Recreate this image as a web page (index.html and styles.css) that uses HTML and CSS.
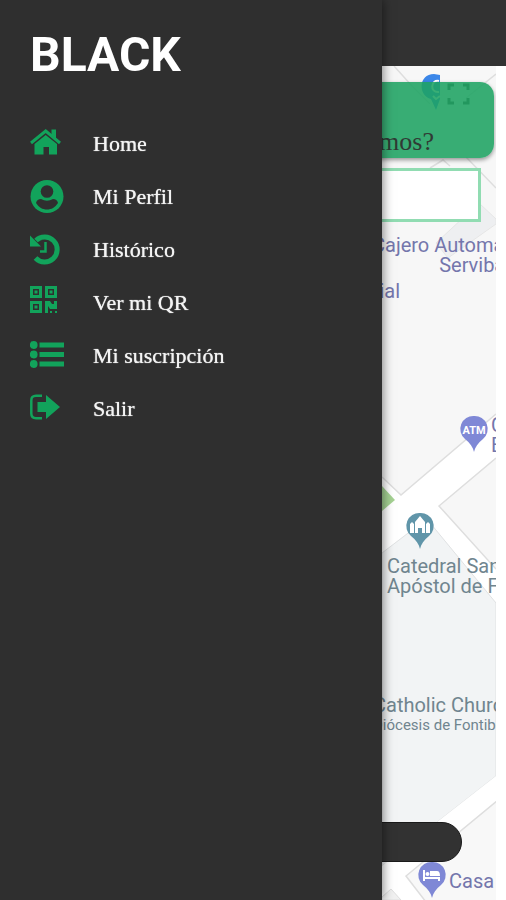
FILE: index.html
```html
<!DOCTYPE html>
<html lang="es">
<head>
    <meta charset="UTF-8">
    <meta name="viewport" content="width=device-width, initial-scale=1.0">
    <title>Black</title>
    <link rel="stylesheet" href="styles.css">
</head>
<body>
    <div class="screen">
        <header class="topbar"></header>

        <main class="map">
            <!-- Streets, blocks and pins -->
            <svg class="map-drawing" viewBox="0 66 496 834" preserveAspectRatio="xMinYMin slice" aria-hidden="true">
                <rect x="0" y="66" width="496" height="834" fill="#f7f7f7"/>
                <g fill="none" stroke="#dedede" stroke-width="1.5">
                    <path d="M394 66L412 86L430 104M496 74L466 98M430 168L443 160L450 166M466 157L496 188"/>
                </g>
                <path d="M479 203L496 219V224L448 258L436 243Z" fill="#eeeff1" stroke="#e6e6e6"/>
                <path d="M382 477L401 495L496 414V458L439 506L496 569V603L431 527L425 523L382 553Z" fill="#fff"/>
                <path d="M382 477L401 495L496 414M496 458L439 506L496 569" fill="none" stroke="#dedede" stroke-width="1.5"/>
                <path d="M382 553L420 524H431L496 603V776L441 819L382 866Z" fill="#f2f4f5" stroke="#e0e2e3"/>
                <path d="M496 776L441 819L382 866V900H496V802Z" fill="#fff"/>
                <path d="M498 800L406 876L426 902H498Z" fill="#f8f8f8" stroke="#dedede" stroke-width="1.5"/>
                <path d="M382 897L391 889L401 900H382Z" fill="#f1f1f1" stroke="#dedede"/>
                <path d="M382 486L395 500L382 511Z" fill="#a5d293"/>

                <path d="M440 75V99L436 110L431 99C418 96 418 74 434 74Z" fill="#3b86e8"/>
                <path d="M439 81C431 79 429 93 439 92M433 96L436 99L440 96" fill="none" stroke="#fff" stroke-width="2"/>
                <path d="M449 90V85H454M463 85H468V90M468 98V103H463M454 103H449V98" fill="none" stroke="#444" stroke-width="3"/>

                <path d="M474 416A13 13 0 0 1 483 439C478 443 475 447 474 452C473 447 470 443 465 439A13 13 0 0 1 474 416Z" fill="#7f88d6"/>
                <text class="pin-text" x="474" y="434" text-anchor="middle">ATM</text>

                <path d="M420 513A13 13 0 0 1 429 536C424 540 421 544 420 549C419 544 416 540 411 536A13 13 0 0 1 420 513Z" fill="#6095a9"/>
                <path d="M410 533V524L412 522L414 524V533ZM426 533V524L428 522L430 524V533ZM415 533V522L420 516L425 522V533H422V528H418V533Z" fill="#fff"/>

                <path d="M432 862A13 13 0 0 1 441 885C436 889 433 893 432 898C431 893 428 889 423 885A13 13 0 0 1 432 862Z" fill="#7f88d6"/>
                <path d="M423 870H425V877H440V881H438V879H425V881H423ZM430 871H437Q440 871 440 876H430Z" fill="#fff"/>
                <circle cx="427.500" cy="874" r="2" fill="#fff"/>
            </svg>

            <div class="map-label label-cajero">Cajero Automático<br>Servibanca</div>
            <div class="map-label label-comercial">Comercial</div>
            <div class="map-label label-atm">C<br>B</div>
            <div class="map-label label-catedral">Catedral Santiago<br>Apóstol de Fontibón</div>
            <div class="map-label label-church">Catholic Church<br><small>Diócesis de Fontibón</small></div>
            <div class="map-label label-casa">Casa</div>

            <form class="search">
                <label class="search-title" for="destino">¿A dónde vamos?</label>
                <input class="search-input" id="destino" type="text">
            </form>
            <button class="request-button" type="button" aria-label="Continuar"></button>
        </main>
    </div>

    <aside class="drawer">
        <h1 class="logo">BLACK</h1>
        <nav class="menu">
            <a class="menu-item" href="#">
                <svg class="menu-icon" viewBox="0 0 34 34" aria-hidden="true">
                    <path d="M1 16L15.700 4L30 16" fill="none" stroke="currentColor" stroke-width="3"/>
                    <path d="M21.500 2.500H26V12L21.500 9ZM4.500 17L15.700 8L27 17V27.500H19V20H13.500V27.500H4.500Z"/>
                </svg>
                Home
            </a>
            <a class="menu-item" href="#">
                <svg class="menu-icon" viewBox="0 0 34 34" aria-hidden="true">
                    <circle cx="17" cy="16.500" r="16.500"/>
                    <circle class="cutout" cx="17" cy="11.500" r="6.300"/>
                    <path class="cutout" d="M6 23C6.500 20.500 8.500 19 11 19Q17 22.500 23 19C25.500 19 27.500 20.500 28 23C25 27.500 21.500 29.500 17 29.500C12.500 29.500 9 27.500 6 23Z"/>
                </svg>
                Mi Perfil
            </a>
            <a class="menu-item" href="#">
                <svg class="menu-icon" viewBox="0 0 34 34" aria-hidden="true">
                    <path d="M6 7.500A12.500 12.500 0 1 1 5.500 25" fill="none" stroke="currentColor" stroke-width="5"/>
                    <path d="M0 2.500V13.500H11Z"/>
                    <path d="M15.500 9V18.500H10" fill="none" stroke="currentColor" stroke-width="2.500"/>
                </svg>
                Histórico
            </a>
            <a class="menu-item" href="#">
                <svg class="menu-icon" viewBox="0 0 34 34" aria-hidden="true">
                    <path d="M1.500 1.500H10.500V10.500H1.500ZM16.500 1.500H25.500V10.500H16.500ZM1.500 16.500H10.500V25.500H1.500Z" fill="none" stroke="currentColor" stroke-width="3"/>
                    <path d="M4.500 4.500H7.500V7.500H4.500ZM19.500 4.500H22.500V7.500H19.500ZM4.500 19.500H7.500V22.500H4.500ZM15 15H20L22 18H24V15H27V23H20L18 20V27H15ZM20 25H22V27H20ZM25 25H27V27H25Z"/>
                </svg>
                Ver mi QR
            </a>
            <a class="menu-item" href="#">
                <svg class="menu-icon" viewBox="0 0 34 34" aria-hidden="true">
                    <circle cx="3.700" cy="6" r="3.900"/>
                    <circle cx="3.700" cy="15.500" r="3.900"/>
                    <circle cx="3.700" cy="25" r="3.900"/>
                    <path d="M9.500 3.500H34V8.500H9.500ZM9.500 13H34V18H9.500ZM9.500 22.500H34V27.500H9.500Z"/>
                </svg>
                Mi suscripción
            </a>
            <a class="menu-item" href="#">
                <svg class="menu-icon" viewBox="0 0 34 34" aria-hidden="true">
                    <path d="M12 3.800H6Q1.300 3.800 1.300 8.500V21.500Q1.300 26.200 6 26.200H12" fill="none" stroke="currentColor" stroke-width="2.500"/>
                    <path d="M7.500 10H16V3L30 15L16 27V20H7.500Z"/>
                </svg>
                Salir
            </a>
        </nav>
    </aside>
</body>
</html>
```

FILE: styles.css
```css
:root {
    --dark: #2f2f2f;
    --green: #12a35b;
}

* {
    box-sizing: border-box;
}

body {
    margin: 0;
    background: #fff;
    font-family: "Liberation Serif", "Times New Roman", serif;
}

.screen {
    display: flex;
    flex-direction: column;
    min-height: 100vh;
}

.topbar {
    height: 66px;
    background: #323232;
}

/* Map */
.map {
    position: relative;
    display: flex;
    flex: 1;
    flex-direction: column;
    margin-right: 10px;
    overflow: hidden;
}

.map-drawing {
    position: absolute;
    top: 0;
    left: 0;
    width: 100%;
    height: 100%;
}

.pin-text {
    fill: #fff;
    font: bold 11px Roboto, sans-serif;
}

.map-label {
    position: absolute;
    color: #7476ac;
    font: 20px/20px Roboto, sans-serif;
    white-space: nowrap;
}

.map-label small {
    font-size: 15px;
}

.label-cajero {
    top: 169px;
    left: 372px;
    text-align: right;
}

.label-comercial {
    top: 215px;
    right: 96px;
}

.label-atm {
    top: 349px;
    left: 491px;
}

.label-catedral,
.label-church {
    color: #70858f;
}

.label-catedral {
    top: 490px;
    left: 387px;
}

.label-church {
    top: 630px;
    left: 373px;
    line-height: 18px;
}

.label-casa {
    top: 805px;
    left: 449px;
}

.search {
    position: relative;
    display: flex;
    flex-direction: column;
    gap: 10px;
    padding: 16px 2px 0 12px;
}

.search-title {
    height: 76px;
    padding: 45px 60px 0 0;
    border-radius: 14px;
    background: rgba(30, 163, 98, 0.88);
    box-shadow: 0 2px 4px rgba(0, 0, 0, 0.4);
    color: #303a34;
    font-size: 26px;
    line-height: 30px;
    text-align: right;
}

.search-input {
    height: 54px;
    margin: 0 13px;
    border: 3px solid #91dcb2;
    background: #fff;
    font-size: 20px;
}

.request-button {
    position: relative;
    height: 40px;
    margin: auto 34px 38px;
    border: 1px solid #1a1a1a;
    border-radius: 20px;
    background: #323232;
}

/* Side menu */
.drawer {
    position: fixed;
    top: 0;
    bottom: 0;
    left: 0;
    width: 75.5%;
    padding: 26px 30px;
    background: var(--dark);
    box-shadow: 1px 0 10px rgba(0, 0, 0, 0.5);
}

.logo {
    margin: 0 0 34px;
    color: #fff;
    font: bold 48px/57px Roboto, sans-serif;
}

.menu {
    display: flex;
    flex-direction: column;
}

.menu-item {
    display: flex;
    align-items: center;
    gap: 29px;
    height: 53px;
    color: #f4f4f4;
    font-size: 22px;
    text-decoration: none;
    text-shadow: 0 0 1px #f4f4f4;
}

.menu-icon {
    width: 34px;
    height: 34px;
    color: var(--green);
    fill: currentColor;
}

.cutout {
    fill: var(--dark);
}
```
